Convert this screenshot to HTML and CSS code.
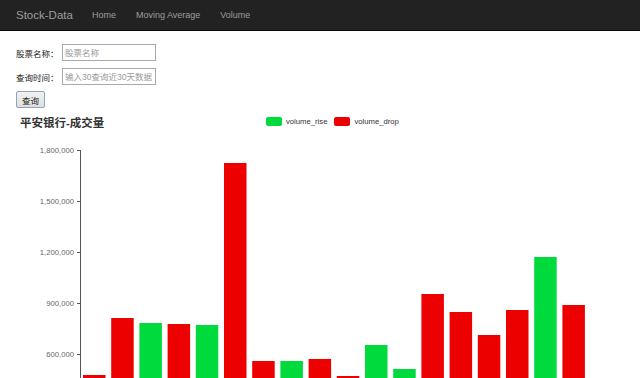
FILE: index.html
```html
<!DOCTYPE html>
<html lang="zh-CN">
<head>
  <meta charset="UTF-8">
  <title>Stock-Data - Volume</title>
  <link rel="stylesheet" href="styles.css">
</head>
<body>
  <nav class="navbar">
    <a class="brand" href="#">Stock-Data</a>
    <ul class="nav-links">
      <li><a href="#">Home</a></li>
      <li><a href="#">Moving Average</a></li>
      <li><a href="#">Volume</a></li>
    </ul>
  </nav>

  <form class="query-form">
    <div class="form-row"><label for="stockName">股票名称：</label><input id="stockName" placeholder="股票名称"></div>
    <div class="form-row"><label for="queryDays">查询时间：</label><input id="queryDays" placeholder="输入30查询近30天数据"></div>
    <button type="button" class="btn-query">查询</button>
  </form>

  <div class="chart">
    <div class="chart-head">
      <h2 class="chart-title">平安银行-成交量</h2>
      <div class="legend">
        <span class="legend-item"><i class="swatch rise"></i>volume_rise</span>
        <span class="legend-item"><i class="swatch drop"></i>volume_drop</span>
      </div>
    </div>
    <svg class="chart-plot" width="640" height="240" viewBox="0 0 640 240">
      <g class="axis">
        <line x1="80.5" y1="10" x2="80.5" y2="240"></line>
        <line x1="77" y1="10.5" x2="80" y2="10.5"></line>
        <line x1="77" y1="61.5" x2="80" y2="61.5"></line>
        <line x1="77" y1="112.5" x2="80" y2="112.5"></line>
        <line x1="77" y1="163.5" x2="80" y2="163.5"></line>
        <line x1="77" y1="214.5" x2="80" y2="214.5"></line>
      </g>
      <g class="axis-labels">
        <text x="74" y="13">1,800,000</text>
        <text x="74" y="64">1,500,000</text>
        <text x="74" y="115">1,200,000</text>
        <text x="74" y="166">900,000</text>
        <text x="74" y="217">600,000</text>
      </g>
      <g id="bars"></g>
    </svg>
  </div>

  <script>
    // bar tops (svg y) and direction, zero line at y=316
    const bars = [
      [235,'drop'],[178,'drop'],[183,'rise'],[184,'drop'],[185,'rise'],[23,'drop'],
      [221,'drop'],[221,'rise'],[219,'drop'],[236,'drop'],[205,'rise'],[229,'rise'],
      [154,'drop'],[172,'drop'],[195,'drop'],[170,'drop'],[117,'rise'],[165,'drop']
    ];
    const g = document.getElementById('bars');
    bars.forEach(([top, kind], i) => {
      const r = document.createElementNS('http://www.w3.org/2000/svg', 'rect');
      r.setAttribute('x', (83 + i * 28.2).toFixed(1));
      r.setAttribute('y', top);
      r.setAttribute('width', 22.5);
      r.setAttribute('height', 316 - top);
      r.setAttribute('class', 'bar ' + kind);
      g.appendChild(r);
    });
  </script>
</body>
</html>
```

FILE: styles.css
```css
:root {
  --nav-bg: #222222;
  --nav-text: #9d9d9d;
  --rise: #00da3c;
  --drop: #ec0000;
  --text: #333333;
  --cjk: "Liberation Sans", "Noto Sans CJK SC", sans-serif;
}
* { box-sizing: border-box; }
body {
  margin: 0; background: #fff; color: var(--text);
  font-family: var(--cjk); overflow: hidden;
}

.navbar {
  display: flex; align-items: center;
  height: 31px; background: var(--nav-bg);
  border-bottom: 1px solid #080808;
  padding-left: 16px;
}
.brand {
  color: var(--nav-text); text-decoration: none;
  font-size: 11.5px; margin-right: 9px;
}
.nav-links { display: flex; list-style: none; margin: 0; padding: 0; }
.nav-links a {
  display: block; padding: 0 10px;
  color: var(--nav-text); text-decoration: none; font-size: 9px;
}

.query-form { padding: 13px 16px 0; }
.form-row { display: flex; align-items: center; margin-bottom: 7px; }
.form-row label { font-size: 8.5px; width: 46px; color: #222; }
.form-row input {
  width: 94px; height: 17px; padding: 0 2px;
  border: 1px solid #a9a9a9; font-size: 8.5px;
  font-family: var(--cjk); outline: none;
}
.form-row input::placeholder { color: #999; }
.btn-query {
  display: block; margin-top: -1px;
  width: 29px; height: 17px; padding: 0;
  font-size: 8.5px; font-family: var(--cjk); color: #222;
  background: linear-gradient(#f2f2f2, #dedede);
  border: 1px solid #8fa3bf; border-radius: 2px;
}

.chart-head { display: flex; align-items: center; height: 19px; margin-top: 4px; }
.chart-title {
  margin: 0 0 0 20px; width: 246px;
  font-size: 11.5px; font-weight: bold; color: var(--text);
}
.legend { display: flex; gap: 7px; font-size: 7.7px; color: var(--text); }
.legend-item { display: flex; align-items: center; gap: 4px; }
.swatch { display: block; width: 16px; height: 9px; border-radius: 2px; }
.swatch.rise { background: var(--rise); }
.swatch.drop { background: var(--drop); }

.chart-plot { display: block; margin-top: 9px; }
.axis line { stroke: #555; stroke-width: 1; }
.axis-labels text {
  font-size: 7.7px; fill: #666; text-anchor: end;
  font-family: "Liberation Sans", sans-serif;
}
.bar.rise { fill: var(--rise); }
.bar.drop { fill: var(--drop); }
```
